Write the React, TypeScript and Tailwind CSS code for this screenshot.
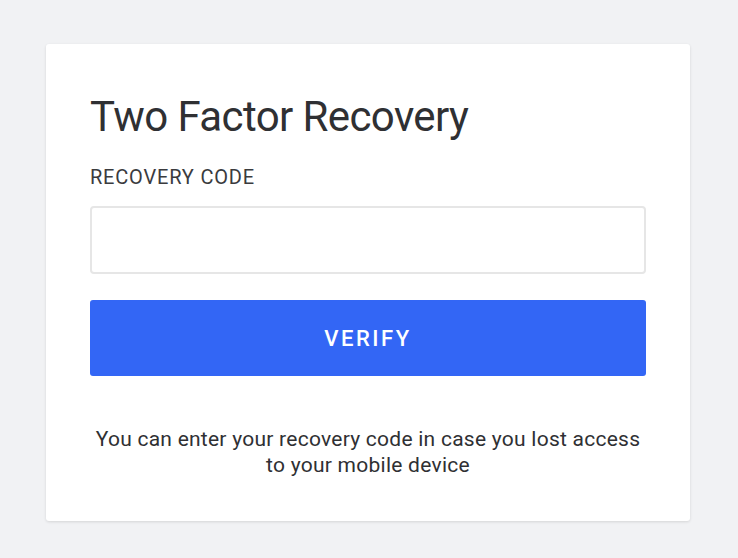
import React from "react";

export default function App() {
  return (
    <div
      className="min-h-screen w-full bg-[#f1f2f4] pt-[44px] px-[46px]"
      style={{ fontFamily: "Roboto, 'Liberation Sans', sans-serif" }}
    >
      <div className="w-[644px] h-[477px] bg-white rounded-[3px] shadow-[0_1px_3px_rgba(0,0,0,0.12)] px-[44px] pt-[49px] flex flex-col">
        <h1 className="text-[42px] leading-[48px] text-[#2f3033] font-normal tracking-[-0.6px]">
          Two Factor Recovery
        </h1>
        <label className="mt-[24px] text-[20px] leading-[24px] text-[#3a3b3e] uppercase tracking-[0.8px]">
          Recovery Code
        </label>
        <input
          type="text"
          className="mt-[17px] h-[68px] w-full rounded-[4px] border-2 border-[#e6e6e6] bg-white outline-none"
        />
        <button className="mt-[26px] h-[76px] w-full rounded-[3px] bg-[#3366f5] text-white text-[22px] font-medium tracking-[2.5px]">
          VERIFY
        </button>
        <p className="mt-[50px] text-center text-[21px] leading-[26px] text-[#2f3033] tracking-[0.25px]">
          You can enter your recovery code in case you lost access
          <br />
          to your mobile device
        </p>
      </div>
    </div>
  );
}
